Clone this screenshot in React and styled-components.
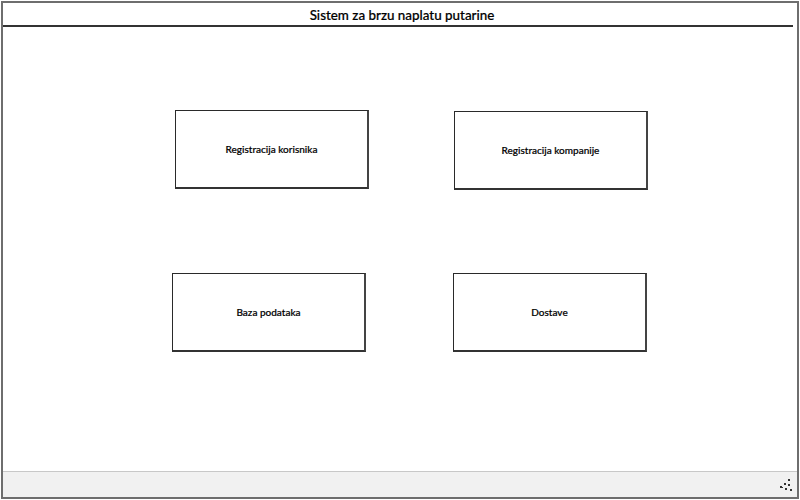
import React from 'react';
import styled, { createGlobalStyle } from 'styled-components';

const GlobalStyle = createGlobalStyle`
  html, body {
    margin: 0;
    padding: 0;
    background: #ffffff;
  }
  body {
    font-family: Lato, "DejaVu Sans Condensed", sans-serif;
    color: #000;
  }
`;

const Frame = styled.div`
  box-sizing: border-box;
  width: 798px;
  height: 498px;
  margin: 1px 0 0 1px;
  border: 2px solid #6e6e6e;
  display: flex;
  flex-direction: column;
  background: #fff;
`;

const TitleBar = styled.div`
  height: 21px;
  margin: 0 4px 0 0;
  border-bottom: 2px solid #333;
  display: flex;
  align-items: center;
  justify-content: center;
  font-size: 13.4px;
  font-weight: 500;
  padding: 1px 0 0 8px;
  -webkit-text-stroke: 0.2px #000;
`;

const Content = styled.div`
  flex: 1;
  display: grid;
  grid-template-columns: 194px 194px;
  grid-auto-rows: 79px;
  column-gap: 86px;
  row-gap: 84px;
  align-content: start;
  padding: 83px 0 0 169px;
`;

const Tile = styled.div`
  box-sizing: border-box;
  border: 1px solid #2a2a2a;
  border-right: 2px solid #444;
  border-bottom: 2px solid #333;
  display: flex;
  align-items: center;
  justify-content: center;
  font-size: 10px;
  font-weight: 500;
  -webkit-text-stroke: 0.2px #000;
  transform: translate(${(p) => p.dx || 0}px, ${(p) => p.dy || 0}px);
`;

const Footer = styled.div`
  height: 25px;
  border-top: 1px solid #c8c8c8;
  background: #f1f1f1;
  display: flex;
  justify-content: flex-end;
  align-items: center;
  padding-right: 4px;
`;

const Grip = () => (
  <svg width="16" height="16" viewBox="0 0 16 16">
    <g fill="#333">
      <rect x="11" y="2" width="2" height="2" />
      <rect x="7" y="6" width="2" height="2" />
      <rect x="11" y="7" width="2" height="2" />
      <rect x="3" y="9" width="2" height="2" />
      <rect x="8" y="11" width="2" height="2" />
      <rect x="13" y="12" width="2" height="2" />
      <rect x="5" y="10" width="1" height="1" />
    </g>
  </svg>
);

const tiles = [
  { label: 'Registracija korisnika', dx: 3, dy: 0 },
  { label: 'Registracija kompanije', dx: 2, dy: 1 },
  { label: 'Baza podataka', dx: 0, dy: 0 },
  { label: 'Dostave', dx: 1, dy: 0 },
];

export default function App() {
  return (
    <>
      <GlobalStyle />
      <Frame>
        <TitleBar>Sistem za brzu naplatu putarine</TitleBar>
        <Content>
          {tiles.map((t) => (
            <Tile key={t.label} dx={t.dx} dy={t.dy}>
              {t.label}
            </Tile>
          ))}
        </Content>
        <Footer>
          <Grip />
        </Footer>
      </Frame>
    </>
  );
}
